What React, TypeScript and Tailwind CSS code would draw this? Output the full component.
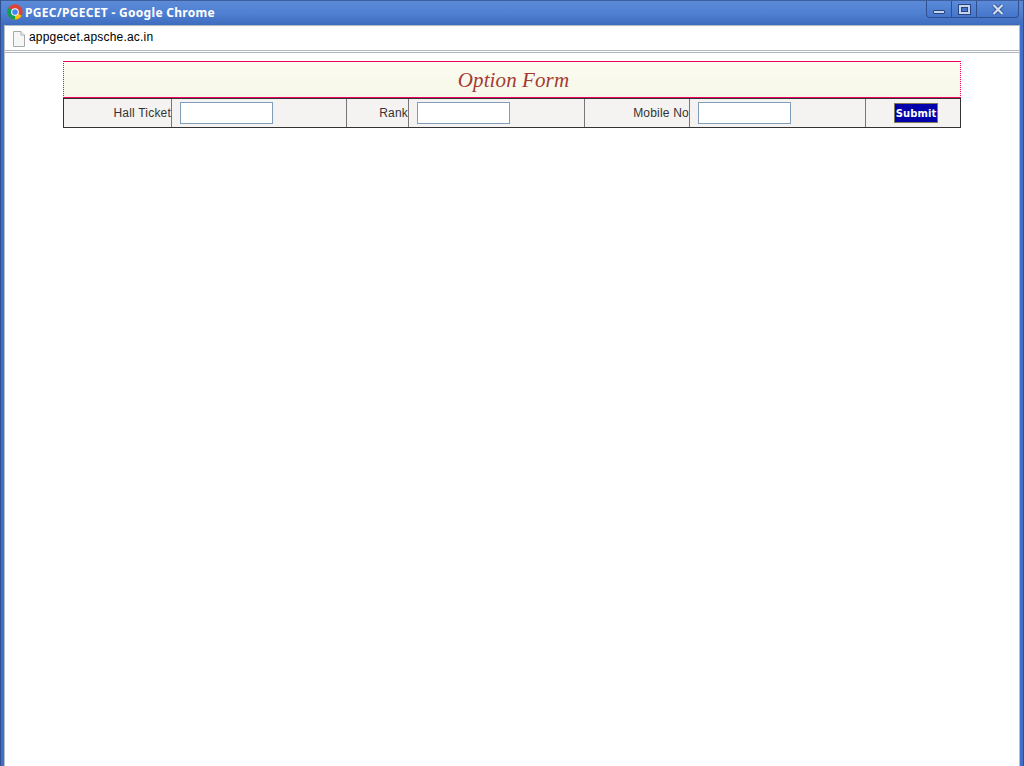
export default function App() {
  const cell = "flex items-center h-full border-r border-[#777777]";
  const label = "justify-end text-[12px] text-[#333333] tracking-[0.2px] font-['Liberation_Sans',Arial,sans-serif]";
  const input = "block w-[93px] h-[22px] border border-[#7f9db9] bg-white ml-2";
  return (
    <div className="w-[1024px] h-[766px] overflow-hidden flex flex-col bg-[#3f6fc6] border-x border-[#2f4f8f]">
      <div className="h-[25px] shrink-0 flex items-start justify-between bg-gradient-to-b from-[#5b8ad6] via-[#4f80d2] to-[#3e6cc0] border-t border-[#3d5f9e]">
        <div className="flex items-center h-[24px] pl-[6px]">
          <svg width="16" height="16" viewBox="0 0 48 48" className="shrink-0 -mt-[2px]">
            <circle cx="24" cy="24" r="23" fill="#db4437" />
            <path d="M24 24 L44 35 A23 23 0 0 1 13 44 Z" fill="#f4c20d" />
            <path d="M24 24 L24 47 A23 23 0 0 1 5 11 Z" fill="#0f9d58" />
            <circle cx="24" cy="24" r="11.5" fill="#ffffff" />
            <circle cx="24" cy="24" r="8.5" fill="#4285f4" />
          </svg>
          <span className="ml-[2px] text-[12px] font-bold text-white leading-none tracking-[0.3px] font-['Noto_Sans',Tahoma,sans-serif] whitespace-nowrap">
            PGEC/PGECET - Google Chrome
          </span>
        </div>
        <div className="flex h-[17px] mr-[4px] bg-gradient-to-b from-[#5a8ad8] to-[#4676cc] border border-t-0 border-[#2f4f8f] rounded-b-[4px]">
          <div className="w-[25px] flex items-end justify-center pb-[3px] border-r border-[#2f4f8f]">
            <div className="w-[12px] h-[4px] bg-[#c5d4ee] border border-[#28457f] rounded-[1px]" />
          </div>
          <div className="w-[25px] flex items-center justify-center border-r border-[#2f4f8f]">
            <svg width="13" height="11" viewBox="0 0 13 11">
              <rect x="0.5" y="0.5" width="12" height="10" fill="#c5d4ee" stroke="#28457f" />
              <rect x="3.5" y="3.5" width="6" height="4" fill="#4676cc" stroke="#28457f" strokeWidth="1" />
            </svg>
          </div>
          <div className="w-[41px] flex items-center justify-center">
            <svg width="12" height="11" viewBox="0 0 12 11">
              <path d="M1.5 1 L10.5 10 M10.5 1 L1.5 10" stroke="#28457f" strokeWidth="3.6" fill="none" />
              <path d="M1.5 1 L10.5 10 M10.5 1 L1.5 10" stroke="#d5e0f3" strokeWidth="2.2" fill="none" />
            </svg>
          </div>
        </div>
      </div>
      <div className="flex-1 min-h-0 ml-[3px] mr-[3px] flex flex-col border-x border-[#b8bfc9] bg-white">
        <div className="h-[26px] shrink-0 flex items-center pl-[7px] bg-white border-y border-[#b4b8bf]">
          <svg width="14" height="16" viewBox="0 0 14 16" className="shrink-0 mt-[1px]">
            <path d="M1.5 0.5 H9 L12.5 4 V15.5 H1.5 Z" fill="#f6f6f6" stroke="#a8a8a8" />
            <path d="M9 0.5 V4 H12.5" fill="#ffffff" stroke="#a8a8a8" />
          </svg>
          <span className="ml-[3px] -mt-[3px] text-[12px] text-black leading-none tracking-[0.2px] font-['Liberation_Sans',Arial,sans-serif]">
            appgecet.apsche.ac.in
          </span>
        </div>
        <div className="h-[1px] mt-[1px] shrink-0 bg-[#b4b8bf]" />
        <div className="flex-1 bg-white pl-[58px] pt-[8px]">
          <div className="w-[898px]">
            <div className="h-[37px] flex items-center justify-center border-y border-[#f00060] border-x border-x-[#f00060] [border-left-style:dotted] [border-right-style:dotted] bg-gradient-to-b from-[#fcfdf0] to-[#f6f7e9]">
              <span className="ml-[3px] mt-[2px] text-[21px] italic text-[#a33a32] font-['Liberation_Serif','Times_New_Roman',serif] tracking-[0.1px] leading-none">
                Option Form
              </span>
            </div>
            <div className="h-[30px] grid grid-cols-[108px_175px_62px_176px_105px_176px_1fr] bg-[#f4f3f1] border border-[#333333] text-[#333333]">
              <div className={`${cell} ${label}`}>Hall Ticket</div>
              <div className={cell}><div className={input} /></div>
              <div className={`${cell} ${label}`}>Rank</div>
              <div className={cell}><div className={input} /></div>
              <div className={`${cell} ${label}`}>Mobile No</div>
              <div className={cell}><div className={input} /></div>
              <div className="flex items-center justify-center h-full">
                <button className="ml-[6px] w-[44px] h-[20px] pt-[2px] bg-[#0000aa] border border-[#7f7a55] text-white text-[10px] tracking-[0.1px] font-bold leading-none font-['DejaVu_Sans',Verdana,sans-serif]">
                  Submit
                </button>
              </div>
            </div>
          </div>
        </div>
      </div>
    </div>
  );
}
